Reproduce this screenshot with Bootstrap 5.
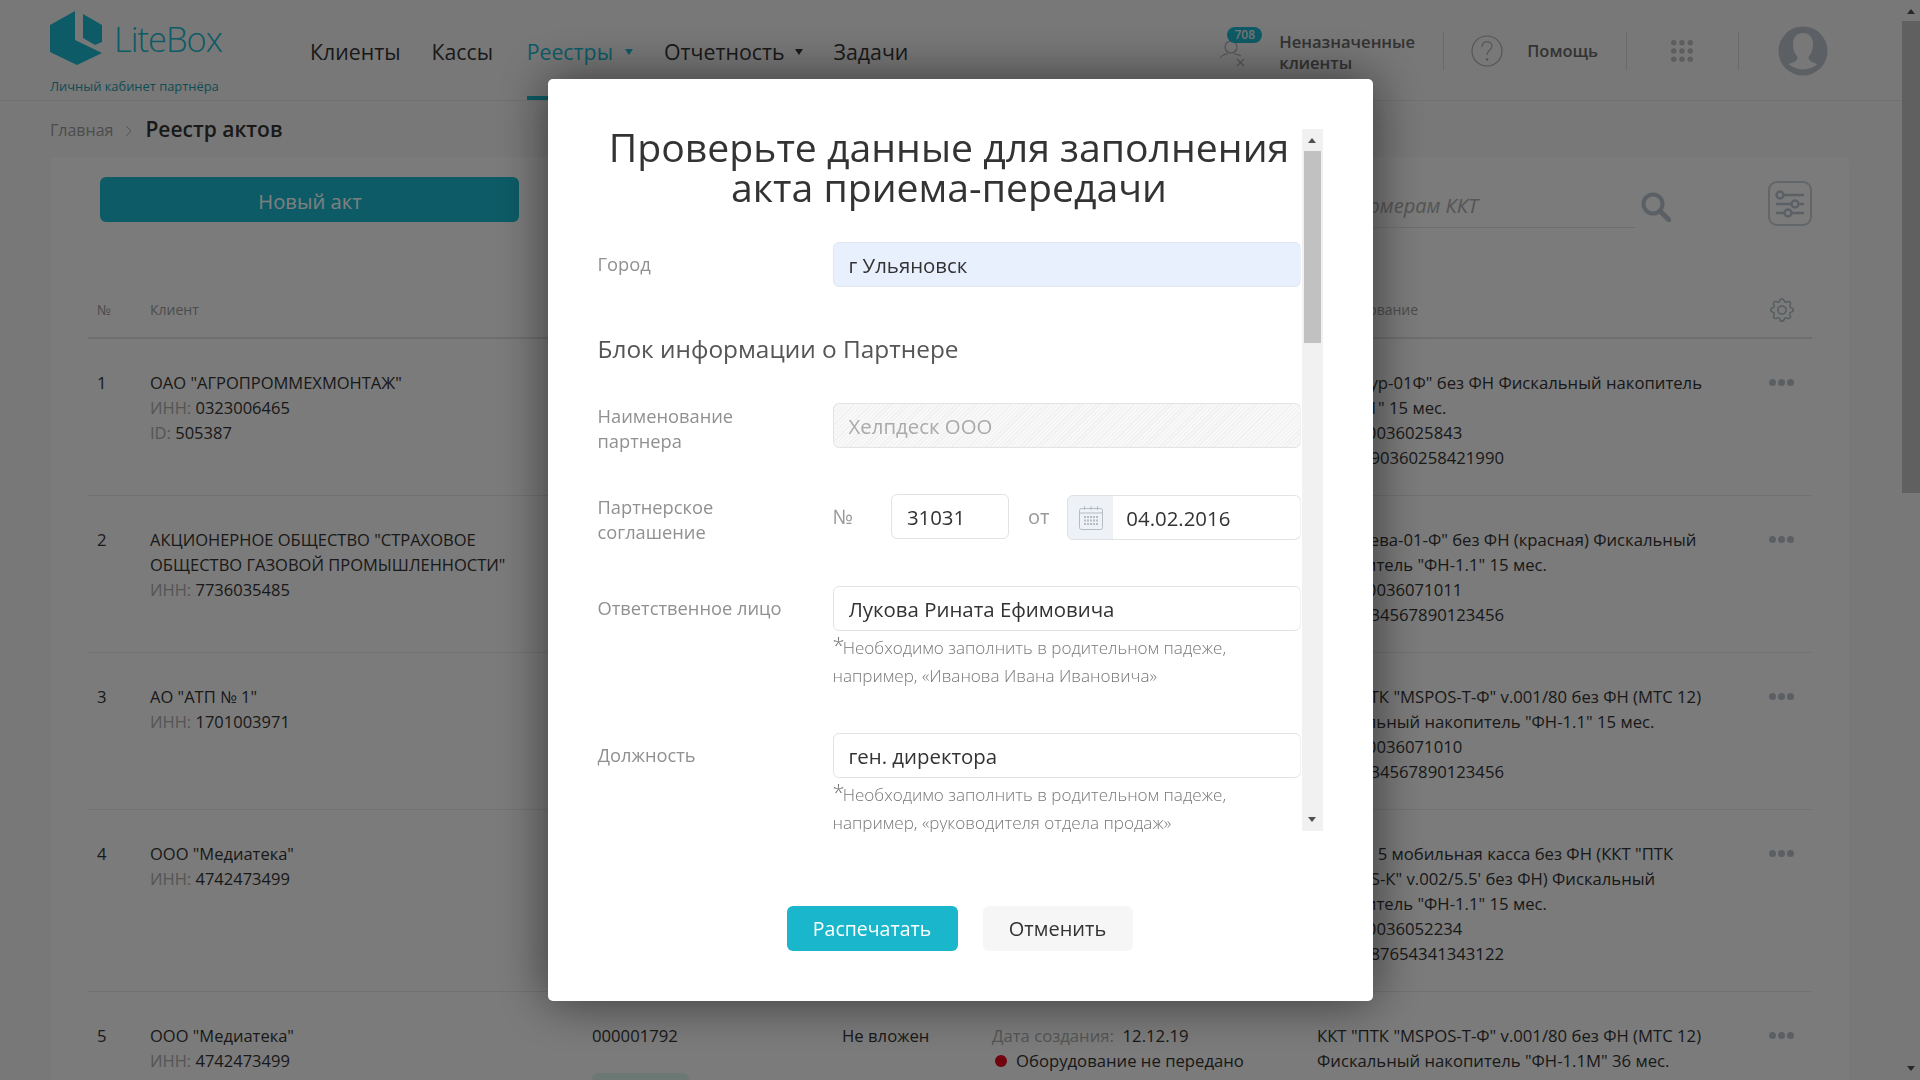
<!DOCTYPE html>
<html lang="ru">
<head>
  <meta charset="UTF-8">
  <title>LiteBox - Реестр актов</title>
  <link href="https://cdn.jsdelivr.net/npm/bootstrap@5.3.3/dist/css/bootstrap.min.css" rel="stylesheet">
  <style>
    html, body { height: 1080px; overflow: hidden; }
    body { background: #f0f0f0; font-family: "Open Sans", "Noto Sans", sans-serif; color: #333; font-size: 16px; }
    .page-wrap { width: 1902px; }

    /* header */
    .top-bar { height: 101px; border-bottom: 1px solid #e2e2e2; padding-left: 50px; }
    .logo-box { width: 230px; height: 100px; position: relative; }
    .logo-mark { position: absolute; left: 0; top: 11px; }
    .logo-name { position: absolute; left: 64px; top: 12px; font-size: 34.500px; font-weight: 300; color: #1ab6cc; letter-spacing: -1px; line-height: 54px; }
    .logo-sub { position: absolute; left: 0; top: 77px; font-size: 12.900px; color: #1c9aaa; line-height: 18px; white-space: nowrap; }
    .main-nav { margin-left: 30px; gap: 31px; height: 100px; }
    .main-nav .nav-link { padding: 0; height: 100px; line-height: 103px; font-size: 21.300px; font-weight: 500; color: #333; position: relative; }
    .main-nav .nav-link.current { color: #1ab6cc; border-bottom: 4px solid #1ab6cc; margin-left: 2.500px; }
    .has-caret { padding-right: 18px !important; }
    .current.has-caret { padding-right: 20px !important; }
    .has-caret::after { content: ""; position: absolute; right: 0; top: 49px; border: 4px solid transparent; border-top: 6px solid #333; }
    .current.has-caret::after { border-top-color: #1ab6cc; }
    .user-zone { margin-left: auto; height: 100px; padding-top: 2px; }
    .bell-box { position: relative; width: 60px; height: 98px; }
    .bell-count { position: absolute; left: 8px; top: 25px; width: 35px; height: 16px; border-radius: 8px; background: #1ab6cc; color: #e8e8e8; font-size: 12px; line-height: 16px; text-align: center; font-weight: 600; }
    .bell-icon { position: absolute; left: 0; top: 37px; }
    .bell-text { width: 164px; font-size: 16.600px; font-weight: 600; color: #666; line-height: 21px; margin-top: 2px; }
    .v-rule { width: 1px; height: 38px; background: #d4d4d4; }
    .help-icon { margin: 0 24px 0 27px; }
    .help-text { font-size: 16.500px; font-weight: 600; color: #666; margin: 1px 28px 0 0; }
    .apps-icon { margin: 0 45px 0 44px; }
    .face-icon { margin: 0 74px 0 39px; }

    /* breadcrumb */
    .crumbs { height: 58px; padding-left: 50px; }
    .crumbs .home { font-size: 16px; color: #999; }
    .crumbs .sep-mark { margin: 2px 13px 0 12px; }
    .crumbs .here { font-size: 21px; font-weight: 600; color: #333; }

    /* card */
    .work-card { margin-left: 50px; width: 1799px; height: 1000px; background: #f6f6f6; border-radius: 5px; padding: 20px 37px 0 38px; margin-top: -2px; }
    .tools-row { height: 111px; padding-left: 12px; position: relative; }
    .new-act { width: 419px; height: 45px; background: #1ab6cc; color: #fff; font-size: 20.200px; border: 0; border-radius: 6px; line-height: 45px; padding: 2px 0 0 1px; }
    .find-box { position: absolute; left: 1100px; top: 10px; width: 447px; height: 41px; border-bottom: 1px solid #ddd; font-style: italic; font-size: 20px; color: #aaa; white-space: nowrap; text-align: right; padding-right: 157px; line-height: 38px; }
    .find-icon { position: absolute; left: 1553px; top: 15px; }
    .tune-btn { position: absolute; left: 1680px; top: 4px; width: 44px; height: 45px; border: 2px solid #c6ccd2; border-radius: 9px; display: flex; align-items: center; justify-content: center; }
    .acts-table { table-layout: fixed; width: 1724px; margin: 0; --bs-table-bg: transparent; --bs-table-color: #333; }
    .acts-table th { font-size: 14px; font-weight: 400; color: #999; height: 50px; padding: 0 0 6px; vertical-align: middle; border-bottom: 2px solid #ddd; }
    .acts-table td { padding: 31px 0 25px; line-height: 25px; font-size: 16.700px; vertical-align: top; border-bottom: 1px solid #e4e4e4; color: #333; }
    .acts-table td:first-child, .acts-table th:first-child { padding-left: 9px; }
    .acts-table td.client-cell { font-size: 16.500px; }
    .muted-key { color: #aaa; }
    .row-dots { display: flex; gap: 2px; padding: 9px 0 0; margin-left: -1px; }
    .row-dots i { display: block; width: 7px; height: 7px; border-radius: 50%; background: #b6bcc4; }
    .state-dot { display: inline-block; width: 12px; height: 12px; border-radius: 50%; background: #e0061c; margin: 0 9px 0 3px; }
    .file-tag { width: 97px; height: 30px; background: #d9f0e6; border-radius: 6px; margin-top: 25px; }

    /* page scrollbar */
    .page-bar { position: fixed; top: 0; right: 0; width: 18px; height: 1080px; background: #f1f1f1; }
    .page-bar .thumb-part { position: absolute; top: 21px; left: 0; width: 18px; height: 472px; background: #c1c1c1; }
    .arrow-up, .arrow-down { position: absolute; left: 50%; margin-left: -4px; border: 4px solid transparent; width: 0; height: 0; }
    .arrow-up { border-bottom: 5px solid #505050; border-top: 0; }
    .arrow-down { border-top: 5px solid #505050; border-bottom: 0; }

    /* modal */
    .check-dialog { max-width: 825px; width: 825px; margin: 79px auto 0; }
    .check-content { border: 0; border-radius: 5px; height: 922px; box-shadow: 0 0 50px rgba(0,0,0,.55); padding: 50px 50px 50px 50px; }
    .scroll-wrap { height: 702px; position: relative; }
    .scroll-view { height: 702px; width: 703px; clip-path: inset(-12px 0 -3px 0); }
    .modal-bar { position: absolute; top: 0; right: 0; width: 21px; height: 702px; background: #f1f1f1; }
    .modal-bar .thumb-part { position: absolute; top: 22px; left: 2px; width: 17px; height: 192px; background: #c1c1c1; }
    .check-title { font-size: 39.200px; font-weight: 400; line-height: 40px; text-align: center; color: #333; margin: -2px 0 35px; }
    .block-title { font-size: 24.400px; font-weight: 400; line-height: 32px; color: #555; margin: 46px 0 38px; }
    .field-row { display: flex; }
    .field-name { width: 235px; flex: none; font-size: 18.300px; line-height: 25px; color: #909090; }
    .field-name.one-line { padding-top: 9px; }
    .field-main { flex: 1; min-width: 0; }
    .check-input { height: 45px; border: 1px solid #e3e3e3; border-radius: 6px; font-size: 20.400px; padding: 1px 15px 0; color: #333; box-shadow: none; }
    .check-input.filled-auto { background: #e8f0fe; border-color: #dfe6f0; }
    .check-input.striped:disabled { color: #aaa; opacity: 1; background: repeating-linear-gradient(135deg, #f8f8f8 0 2px, #f0f0f0 2px 3px); }
    .num-mark, .from-mark { font-size: 20px; color: #999; }
    .num-input { width: 118px; margin-left: 38px; }
    .from-mark { margin: 0 18px 0 19px; }
    .date-group { width: 234px; margin-top: 1px; flex-wrap: nowrap; }
    .date-group .input-group-text { width: 47px; padding: 0; justify-content: center; background: #eef1f5; border: 1px solid #dde1e6; border-radius: 6px 0 0 6px; }
    .date-group .check-input { padding-left: 13px; border-left: 0; }
    .hint-text { font-size: 17.100px; font-weight: 300; line-height: 28px; color: #777; margin-top: 3px; }
    .hint-text .star { font-size: 22px; line-height: 0; position: relative; top: -1px; margin-right: -2px; }
    .act-btn { height: 45px; font-size: 20px; line-height: 45px; padding: 0; border: 0; border-radius: 6px; }
    .act-print { width: 171px; background: #1ab6cc; color: #fff; font-weight: 500; font-size: 19.500px; }
    .act-cancel { width: 150px; background: #f6f6f6; color: #333; margin-left: 25px; }
    .foot-row { margin-top: 75px; padding-left: 189px; }
  </style>
</head>
<body>

  <div class="page-wrap">

    <!-- Header -->
    <div class="top-bar d-flex align-items-start">
      <div class="logo-box flex-shrink-0">
        <svg class="logo-mark" width="52" height="54" viewBox="0 0 52 54"><path fill="#1ab6cc" d="M0 14 25 0V29L52 42 27 54 0 41Z M33 3 52 14V31L45 34 33 27Z"/></svg>
        <span class="logo-name">LiteBox</span>
        <span class="logo-sub">Личный кабинет партнёра</span>
      </div>
      <ul class="nav main-nav flex-nowrap">
        <li class="nav-item"><a class="nav-link" href="#">Клиенты</a></li>
        <li class="nav-item"><a class="nav-link" href="#">Кассы</a></li>
        <li class="nav-item"><a class="nav-link current has-caret" href="#">Реестры</a></li>
        <li class="nav-item"><a class="nav-link has-caret" href="#">Отчетность</a></li>
        <li class="nav-item"><a class="nav-link" href="#">Задачи</a></li>
      </ul>
      <div class="user-zone d-flex align-items-center">
        <div class="bell-box">
          <svg class="bell-icon" width="30" height="28" viewBox="0 0 30 28" fill="none" stroke="#aaa" stroke-width="1.2"><circle cx="12" cy="8" r="6"/><path d="M1 19c3-4 6-4 8-4M15 15c3 0 5 1 7 2M18 20l7 7M25 20l-7 7"/></svg>
          <span class="bell-count">708</span>
        </div>
        <div class="bell-text">Неназначенные клиенты</div>
        <div class="v-rule"></div>
        <svg class="help-icon" width="32" height="32" viewBox="0 0 32 32" fill="none" stroke="#aaa" stroke-width="1.2"><circle cx="16" cy="16" r="15"/><path d="M11 12c0-7 10-7 10-1 0 4-5 4-5 9"/><circle cx="16" cy="24.5" r=".6"/></svg>
        <div class="help-text">Помощь</div>
        <div class="v-rule"></div>
        <svg class="apps-icon" width="22" height="22" viewBox="0 0 24 24" fill="#bbb"><circle cx="3" cy="3" r="3"/><circle cx="12" cy="3" r="3"/><circle cx="21" cy="3" r="3"/><circle cx="3" cy="12" r="3"/><circle cx="12" cy="12" r="3"/><circle cx="21" cy="12" r="3"/><circle cx="3" cy="21" r="3"/><circle cx="12" cy="21" r="3"/><circle cx="21" cy="21" r="3"/></svg>
        <div class="v-rule"></div>
        <svg class="face-icon" width="50" height="50" viewBox="0 0 50 50"><circle cx="25" cy="25" r="24.5" fill="#b8c0c8"/><path fill="#f0f0f0" d="M25 7c-7 0-10 5-10 11 0 6 2 10 4.500 13 0 3-2 5-9 7a22 22 0 0 0 29 0c-7-2-9-4-9-7 2.500-3 4.500-7 4.500-13 0-6-3-11-10-11Z"/></svg>
      </div>
    </div>

    <!-- Breadcrumb -->
    <div class="crumbs d-flex align-items-center">
      <span class="home">Главная</span>
      <svg class="sep-mark" width="7" height="12" viewBox="0 0 7 12" fill="none" stroke="#aaa"><path d="M1 1l5 5-5 5"/></svg>
      <span class="here">Реестр актов</span>
    </div>

    <!-- Acts -->
    <div class="work-card">
      <div class="tools-row">
        <button class="btn new-act" type="button">Новый акт</button>
        <div class="find-box">Поиск по номерам ККТ</div>
        <svg class="find-icon" width="30" height="30" viewBox="0 0 30 30" fill="none" stroke="#b6c0cc"><circle cx="12" cy="12" r="9.500" stroke-width="4"/><path d="M19 19l9 9" stroke-width="5" stroke-linecap="round"/></svg>
        <div class="tune-btn">
          <svg width="30" height="30" viewBox="0 0 30 30" fill="none" stroke="#b6c0cc" stroke-width="2.500"><path d="M8 6h21M1 15h15M24 15h5M1 24h9M17 24h12"/><circle cx="5" cy="6" r="3.500"/><circle cx="20" cy="15" r="3.500"/><circle cx="13" cy="24" r="3.500"/></svg>
        </div>
      </div>

      <table class="table acts-table">
        <colgroup><col style="width:62px"><col style="width:442px"><col style="width:250px"><col style="width:150px"><col style="width:325px"><col style="width:453px"><col style="width:42px"></colgroup>
        <thead>
          <tr><th>№</th><th>Клиент</th><th>Номер</th><th>Акт</th><th>Статус</th><th>Оборудование</th>
            <th><svg width="24" height="24" viewBox="0 0 16 16" fill="#aab8c0"><path d="M8 4.754a3.246 3.246 0 1 0 0 6.492 3.246 3.246 0 0 0 0-6.492zM5.754 8a2.246 2.246 0 1 1 4.492 0 2.246 2.246 0 0 1-4.492 0z"/><path d="M9.796 1.343c-.527-1.790-3.065-1.790-3.592 0l-.094.319a.873.873 0 0 1-1.255.520l-.292-.160c-1.640-.892-3.433.902-2.540 2.541l.159.292a.873.873 0 0 1-.520 1.255l-.319.094c-1.790.527-1.790 3.065 0 3.592l.319.094a.873.873 0 0 1 .520 1.255l-.160.292c-.892 1.640.901 3.434 2.541 2.540l.292-.159a.873.873 0 0 1 1.255.520l.094.319c.527 1.790 3.065 1.790 3.592 0l.094-.319a.873.873 0 0 1 1.255-.520l.292.160c1.640.893 3.434-.902 2.540-2.541l-.159-.292a.873.873 0 0 1 .520-1.255l.319-.094c1.790-.527 1.790-3.065 0-3.592l-.319-.094a.873.873 0 0 1-.520-1.255l.160-.292c.893-1.640-.902-3.433-2.541-2.540l-.292.159a.873.873 0 0 1-1.255-.520l-.094-.319zm-2.633.283c.246-.835 1.428-.835 1.674 0l.094.319a1.873 1.873 0 0 0 2.693 1.115l.291-.160c.764-.415 1.600.420 1.184 1.185l-.159.292a1.873 1.873 0 0 0 1.116 2.692l.318.094c.835.246.835 1.428 0 1.674l-.319.094a1.873 1.873 0 0 0-1.115 2.693l.160.291c.415.764-.420 1.600-1.185 1.184l-.291-.159a1.873 1.873 0 0 0-2.693 1.116l-.094.318c-.246.835-1.428.835-1.674 0l-.094-.319a1.873 1.873 0 0 0-2.692-1.115l-.292.160c-.764.415-1.600-.420-1.184-1.185l.159-.291A1.873 1.873 0 0 0 1.945 8.930l-.319-.094c-.835-.246-.835-1.428 0-1.674l.319-.094A1.873 1.873 0 0 0 3.060 4.377l-.160-.292c-.415-.764.420-1.600 1.185-1.184l.292.159a1.873 1.873 0 0 0 2.692-1.115l.094-.319z"/></svg></th></tr>
        </thead>
        <tbody>
          <tr>
            <td>1</td>
            <td class="client-cell">ОАО "АГРОПРОММЕХМОНТАЖ"<br><span class="muted-key">ИНН:</span> 0323006465<br><span class="muted-key">ID:</span> 505387</td>
            <td></td><td></td><td></td>
            <td>ККТ Азур-01Ф" без ФН Фискальный накопитель<br>"ФН-1.1" 15 мес.<br>ЗН: 000036025843<br>ФН: 8790360258421990</td>
            <td><div class="row-dots"><i></i><i></i><i></i></div></td>
          </tr>
          <tr>
            <td>2</td>
            <td class="client-cell">АКЦИОНЕРНОЕ ОБЩЕСТВО "СТРАХОВОЕ<br>ОБЩЕСТВО ГАЗОВОЙ ПРОМЫШЛЕННОСТИ"<br><span class="muted-key">ИНН:</span> 7736035485</td>
            <td></td><td></td><td></td>
            <td>ККТ "Нева-01-Ф" без ФН (красная) Фискальный<br>накопитель "ФН-1.1" 15 мес.<br>ЗН: 000036071011<br>ФН: 1234567890123456</td>
            <td><div class="row-dots"><i></i><i></i><i></i></div></td>
          </tr>
          <tr>
            <td>3</td>
            <td class="client-cell">АО "АТП № 1"<br><span class="muted-key">ИНН:</span> 1701003971</td>
            <td></td><td></td><td></td>
            <td>ККТ "ПТК "MSPOS-Т-Ф" v.001/80 без ФН (МТС 12)<br>Фискальный накопитель "ФН-1.1" 15 мес.<br>ЗН: 000036071010<br>ФН: 1234567890123456</td>
            <td><div class="row-dots"><i></i><i></i><i></i></div></td>
          </tr>
          <tr>
            <td>4</td>
            <td class="client-cell">ООО "Медиатека"<br><span class="muted-key">ИНН:</span> 4742473499</td>
            <td></td><td></td><td></td>
            <td>MSPOS 5 мобильная касса без ФН (ККТ "ПТК<br>"MSPOS-К" v.002/5.5' без ФН) Фискальный<br>накопитель "ФН-1.1" 15 мес.<br>ЗН: 000036052234<br>ФН: 9987654341343122</td>
            <td><div class="row-dots"><i></i><i></i><i></i></div></td>
          </tr>
          <tr>
            <td>5</td>
            <td class="client-cell">ООО "Медиатека"<br><span class="muted-key">ИНН:</span> 4742473499</td>
            <td>000001792<div class="file-tag"></div></td>
            <td>Не вложен</td>
            <td><span class="muted-key">Дата создания:</span>&nbsp; 12.12.19<br><span class="state-dot"></span>Оборудование не передано</td>
            <td>ККТ "ПТК "MSPOS-Т-Ф" v.001/80 без ФН (МТС 12)<br>Фискальный накопитель "ФН-1.1М" 36 мес.</td>
            <td><div class="row-dots"><i></i><i></i><i></i></div></td>
          </tr>
        </tbody>
      </table>
    </div>
  </div>

  <div class="page-bar">
    <span class="arrow-up" style="top:9px"></span>
    <div class="thumb-part"></div>
    <span class="arrow-down" style="bottom:9px"></span>
  </div>

  <div class="modal-backdrop show"></div>

  <!-- Check data dialog -->
  <div class="modal d-block" tabindex="-1">
    <div class="modal-dialog check-dialog">
      <div class="modal-content check-content">
        <div class="scroll-wrap">
          <div class="scroll-view">
            <h2 class="check-title">Проверьте данные для заполнения<br>акта приема-передачи</h2>

            <div class="field-row">
              <div class="field-name one-line">Город</div>
              <div class="field-main"><input class="form-control check-input filled-auto" value="г Ульяновск"></div>
            </div>

            <h3 class="block-title">Блок информации о Партнере</h3>

            <div class="field-row" style="margin-bottom:41px">
              <div class="field-name">Наименование<br>партнера</div>
              <div class="field-main"><input class="form-control check-input striped" value="Хелпдеск ООО" disabled></div>
            </div>

            <div class="field-row" style="margin-bottom:42px">
              <div class="field-name">Партнерское<br>соглашение</div>
              <div class="field-main d-flex align-items-start">
                <span class="num-mark pt-2">№</span>
                <input class="form-control check-input num-input flex-shrink-0" value="31031">
                <span class="from-mark pt-2">от</span>
                <div class="input-group date-group">
                  <span class="input-group-text">
                    <svg width="26" height="26" viewBox="0 0 26 26" fill="none" stroke="#b4bcc6"><rect x="1.500" y="3.500" width="23" height="21" rx="2"/><path d="M6.500 1v4M13 1v4M19.500 1v4M1.500 8h23"/><path stroke-width="2" stroke-dasharray="2 1" d="M6 12h14M6 15.500h14M6 19h14"/></svg>
                  </span>
                  <input class="form-control check-input" value="04.02.2016">
                </div>
              </div>
            </div>

            <div class="field-row" style="margin-bottom:43px">
              <div class="field-name one-line">Ответственное лицо</div>
              <div class="field-main">
                <input class="form-control check-input" value="Лукова Рината Ефимовича">
                <div class="hint-text"><span class="star">*</span>Необходимо заполнить в родительном падеже,<br>например, «Иванова Ивана Ивановича»</div>
              </div>
            </div>

            <div class="field-row">
              <div class="field-name one-line">Должность</div>
              <div class="field-main">
                <input class="form-control check-input" value="ген. директора">
                <div class="hint-text"><span class="star">*</span>Необходимо заполнить в родительном падеже,<br>например, «руководителя отдела продаж»</div>
              </div>
            </div>
          </div>
          <div class="modal-bar">
            <span class="arrow-up" style="top:9px"></span>
            <div class="thumb-part"></div>
            <span class="arrow-down" style="bottom:9px"></span>
          </div>
        </div>
        <div class="foot-row d-flex">
          <button class="btn act-btn act-print" type="button">Распечатать</button>
          <button class="btn act-btn act-cancel" type="button">Отменить</button>
        </div>
      </div>
    </div>
  </div>

  <script src="https://cdn.jsdelivr.net/npm/bootstrap@5.3.3/dist/js/bootstrap.bundle.min.js"></script>
</body>
</html>
